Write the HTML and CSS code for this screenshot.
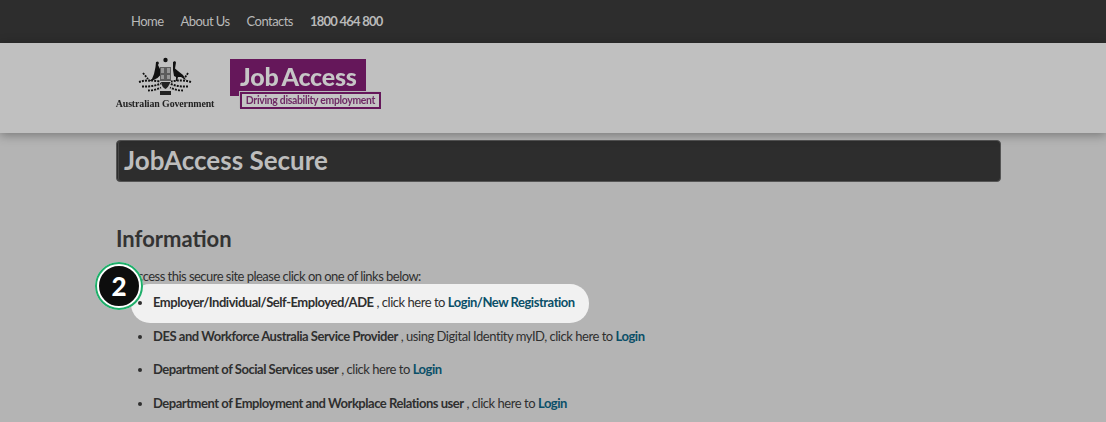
FILE: index.html
```html
<!DOCTYPE html>
<html lang="en">
<head>
<meta charset="utf-8">
<title>JobAccess Secure</title>
<link rel="stylesheet" href="styles.css">
</head>
<body>
<nav class="topnav">
  <div class="nav-inner">
    <a class="nav-link">Home</a>
    <a class="nav-link">About Us</a>
    <a class="nav-link">Contacts</a>
    <span class="nav-phone">1800 464 800</span>
  </div>
</nav>
<header class="masthead">
  <div class="gov">
    <svg class="crest" width="56" height="40" viewBox="0 0 56 40" aria-hidden="true">
      <circle cx="27.500" cy="3" r="2.200" fill="#111"/>
      <path d="M18 5l2-.5 1 1.500-1 2 2 4 .5 6-3 3-4 2-6 2 4.500-3 2-5 1.500-7z" fill="#111"/>
      <path d="M35 5l2-1 1 1.500-1 6 3 2.500 5 4 3 5-5-3-3 0-1 4-1 0 0-4-2-1-1-6z" fill="#111"/>
      <rect x="22" y="10" width="11" height="14" fill="#5c5c5c"/>
      <path d="M23 11h3v5h-3zM29 11h3v5h-3zM23 18h3v4h-3zM29 18h3v4h-3z" fill="#969696"/>
      <g fill="none" stroke="#111" stroke-dasharray="2 1.100">
        <path d="M1 25c6-2 13-2 21-.5M53 25c-6-2-13-2-20-.5" stroke-width="2"/>
        <path d="M4 29.500c6 0 12 0 19-3M50 29.500c-6 0-12 0-18-3" stroke-width="2"/>
        <path d="M10 33.500c4 0 9-1 13-3M45 33.500c-4 0-9-1-13-3" stroke-width="1.800"/>
        <path d="M5 16l5 6M50 16l-4 6" stroke-width="1.800"/>
      </g>
      <path d="M23 25c1 4 2 6 4.500 7 2-1 3-3 5-7z" fill="#222"/>
      <rect x="22" y="34" width="11" height="4" fill="#222"/>
    </svg>
    <span class="gov-name">Australian Government</span>
  </div>
  <div class="brand">
    <div class="brand-top">Job Access</div>
    <div class="brand-tag">Driving disability employment</div>
  </div>
</header>
<main class="content">
  <h1 class="title-bar">JobAccess Secure</h1>
  <h2 class="section-title">Information</h2>
  <p class="intro">To access this secure site please click on one of links below:</p>
  <ul class="links">
    <li class="item"><strong>Employer/Individual/Self-Employed/ADE</strong> , click here to <a class="link">Login/New Registration</a></li>
    <li class="item"><strong>DES and Workforce Australia Service Provider</strong> , using Digital Identity myID, click here to <a class="link">Login</a></li>
    <li class="item"><strong>Department of Social Services user</strong> , click here to <a class="link">Login</a></li>
    <li class="item"><strong>Department of Employment and Workplace Relations user</strong> , click here to <a class="link">Login</a></li>
  </ul>
</main>
<div class="spot"></div>
<div class="badge"><span>2</span></div>
</body>
</html>
```
FILE: styles.css
```css
* { box-sizing: border-box; }
html, body { height: 100%; }
body {
  margin: 0;
  height: 422px;
  overflow: hidden;
  background: #b4b4b4;
  font-family: Lato, "Open Sans", sans-serif;
  font-size: 13px;
  color: #2f2f2f;
  position: relative;
}
.topnav {
  height: 43px;
  background: #2d2d2d;
}
.nav-inner {
  display: flex;
  align-items: center;
  gap: 17px;
  height: 41px;
  padding-left: 131px;
  letter-spacing: -.55px;
}
.nav-link { color: #b9b9b9; }
.nav-phone { font-weight: 700; color: #b9b9b9; letter-spacing: -.75px; }
.masthead {
  height: 90px;
  background: #c0c0c0;
  box-shadow: 0 2px 10px rgba(0,0,0,.35);
  padding: 14px 0 0 115px;
  display: flex;
  align-items: flex-start;
  gap: 15px;
  position: relative;
}
.gov {
  width: 100px;
  display: flex;
  flex-direction: column;
  align-items: center;
  filter: blur(.35px);
}
.crest { display: block; margin-left: 1px; }
.gov-name {
  font-family: "Liberation Serif", serif;
  font-weight: 700;
  font-size: 9.9px;
  letter-spacing: -.1px;
  white-space: nowrap;
  color: #222;
  margin-top: 1px;
}
.brand { width: 152px; margin-top: 2px; filter: blur(.35px); }
.brand-top {
  width: 136px;
  height: 37px;
  background: #65175a;
  color: #c6c6c6;
  font-size: 25px;
  font-weight: 900;
  line-height: 34px;
  padding-left: 10px;
  white-space: nowrap;
  letter-spacing: -.2px;
  word-spacing: -2px;
}
.brand-tag {
  width: 141px;
  height: 17px;
  margin: -4px 0 0 10px;
  background: #c4c4c4;
  border: 2px solid #65175a;
  box-shadow: -1px -1px 0 #b9b9b9;
  color: #6f2a65;
  font-size: 10.4px;
  font-weight: 700;
  line-height: 13px;
  letter-spacing: -.3px;
  text-align: center;
  white-space: nowrap;
  position: relative;
}
.content { padding: 7px 105px 0 116px; }
.title-bar {
  margin: 0;
  height: 42px;
  width: 885px;
  background: #2d2d2d;
  border: 1px solid #555;
  border-radius: 4px;
  box-shadow: inset 1px 0 0 #2d2d2d, inset 2px 0 0 #474747;
  color: #bdbdbd;
  font-size: 26px;
  font-weight: 700;
  line-height: 38px;
  padding-left: 7px;
}
.section-title {
  margin: 42px 0 0;
  font-size: 22px;
  font-weight: 700;
  line-height: 30px;
  color: #333;
}
.intro { margin: 13px 0 0; line-height: 18px; letter-spacing: -.53px; }
.links { margin: 8px 0 0; padding: 0 0 0 37px; list-style: disc; letter-spacing: -.47px; }
.item { line-height: 18px; margin-bottom: 15.6px; position: relative; z-index: 2; }
.item strong { font-weight: 700; }
.link { color: #0a4f68; font-weight: 700; }
.spot {
  position: absolute;
  left: 131px;
  top: 284px;
  width: 458px;
  height: 39px;
  border-radius: 19px;
  background: #f1f1f1;
  z-index: 1;
}
.badge {
  position: absolute;
  left: 95px;
  top: 262px;
  width: 48px;
  height: 48px;
  border-radius: 50%;
  background: #0d0d0d;
  border: 4px solid #fff;
  outline: 2px solid #1fae6a;
  outline-offset: -2px;
  display: flex;
  align-items: center;
  justify-content: center;
  color: #fff;
  font-family: Lato, sans-serif;
  font-size: 26px;
  font-weight: 900;
  z-index: 3;
}
```
